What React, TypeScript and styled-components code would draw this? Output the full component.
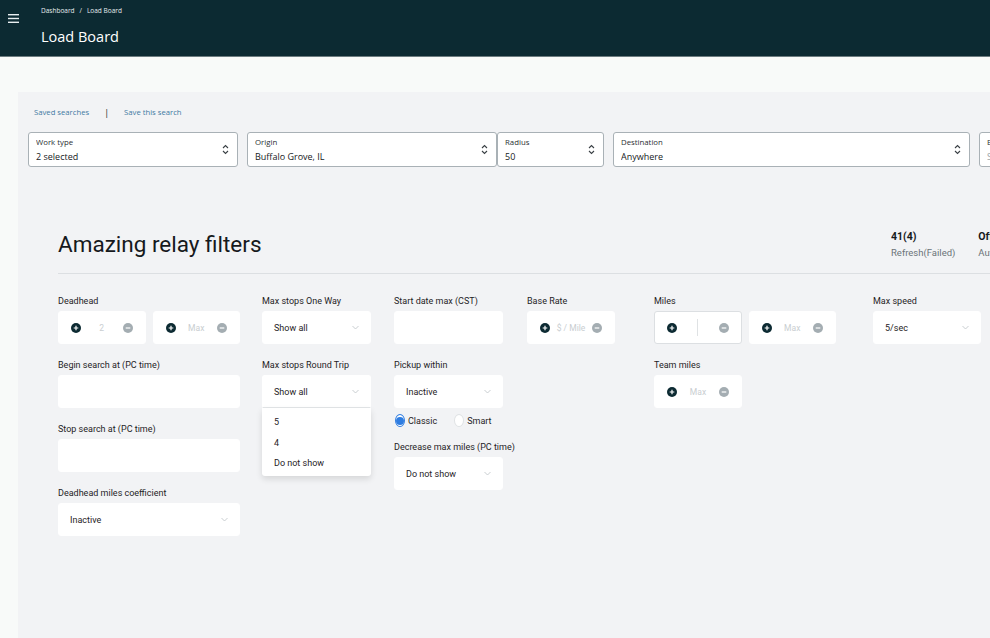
import React from "react";
import styled, { createGlobalStyle } from "styled-components";

const GlobalStyle = createGlobalStyle`
  html, body {
    margin: 0;
    padding: 0;
    background: #f8faf9;
    overflow: hidden;
  }
  * { box-sizing: border-box; }
`;

const Page = styled.div`
  width: 990px;
  height: 638px;
  display: flex;
  flex-direction: column;
  background: #f8faf9;
  font-family: "Roboto", "Liberation Sans", sans-serif;
  overflow: hidden;
`;

const Header = styled.header`
  height: 57px;
  flex-shrink: 0;
  background: #0c2a32;
  border-bottom: 1px solid #6c7c80;
  display: flex;
  font-family: "Open Sans", "Liberation Sans", sans-serif;
`;

const Burger = styled.div`
  width: 41px;
  padding: 6px 0 0 8px;
`;

const HeaderText = styled.div`
  display: flex;
  flex-direction: column;
  padding-top: 6px;
`;

const Crumbs = styled.div`
  font-size: 6.5px;
  color: #e6ecee;
  display: flex;
  gap: 5px;
`;

const HeaderTitle = styled.h1`
  margin: 12px 0 0;
  font-size: 14.5px;
  font-weight: 400;
  color: #ffffff;
`;

const Body = styled.div`
  flex: 1;
  padding: 35px 0 0 18px;
  display: flex;
`;

const Panel = styled.div`
  flex: 1;
  background: #f2f3f5;
  padding: 14px 0 0 10px;
  display: flex;
  flex-direction: column;
  min-width: 0;
`;

const SavedRow = styled.div`
  display: flex;
  align-items: center;
  gap: 15px;
  padding-left: 6px;
  height: 12px;
  font-family: "Open Sans", "Liberation Sans", sans-serif;
  font-size: 7.7px;
`;

const LinkText = styled.span`
  color: #3f7aa3;
`;

const Bar = styled.span`
  color: #16191c;
  font-size: 9px;
`;

const SearchRow = styled.div`
  display: flex;
  margin-top: 14px;
  white-space: nowrap;
`;

const SearchBox = styled.div<{ $w: number; $ml?: number }>`
  width: ${(p) => p.$w}px;
  flex-shrink: 0;
  margin-left: ${(p) => p.$ml ?? 0}px;
  height: 35px;
  background: #fff;
  border: 1px solid #a9b1b6;
  border-radius: 3px;
  display: flex;
  align-items: center;
  padding: 0 8px 0 7px;
  font-family: "Open Sans", "Liberation Sans", sans-serif;
`;

const SearchText = styled.div`
  flex: 1;
  display: flex;
  flex-direction: column;
  gap: 3px;
  overflow: hidden;
`;

const SearchLabel = styled.span`
  font-size: 7.8px;
  color: #2a2f33;
`;

const SearchValue = styled.span<{ $muted?: boolean }>`
  font-size: 9px;
  color: ${(p) => (p.$muted ? "#9aa3a8" : "#16191c")};
`;

const FilterArea = styled.div`
  margin-top: 60px;
  padding-left: 30px;
  display: flex;
  flex-direction: column;
`;

const TitleRow = styled.div`
  display: flex;
  align-items: center;
  justify-content: space-between;
  height: 47px;
  border-bottom: 1px solid #dcdfe2;
  padding-bottom: 19px;
  white-space: nowrap;
`;

const Title = styled.h2`
  margin: 0;
  font-size: 22.5px;
  font-weight: 400;
  color: #16191c;
  line-height: 1;
  padding-top: 8px;
`;

const Stats = styled.div`
  display: flex;
  gap: 23px;
  margin-right: -40px;
  width: 139px;
  overflow: hidden;
  padding-top: 7px;
`;

const Stat = styled.div`
  display: flex;
  flex-direction: column;
  gap: 4px;
`;

const StatNum = styled.span`
  font-size: 10.5px;
  font-weight: 700;
  color: #16191c;
`;

const StatLabel = styled.span`
  font-size: 9.5px;
  color: #6b7378;
`;

const Grid = styled.div`
  display: flex;
  padding-top: 21px;
  align-items: flex-start;
`;

const Column = styled.div<{ $w: number; $ml?: number }>`
  width: ${(p) => p.$w}px;
  margin-left: ${(p) => p.$ml ?? 0}px;
  flex-shrink: 0;
  display: flex;
  flex-direction: column;
`;

const Field = styled.div`
  display: flex;
  flex-direction: column;
  margin-bottom: 15px;
  position: relative;
`;

const Label = styled.label`
  font-size: 9px;
  line-height: 12px;
  color: #1f2326;
  margin-bottom: 4px;
  white-space: nowrap;
`;

const Box = styled.div<{ $bordered?: boolean; $open?: boolean }>`
  height: 33px;
  background: #fff;
  border-radius: ${(p) => (p.$open ? "3px 3px 0 0" : "3px")};
  border: 1px solid ${(p) => (p.$bordered ? "#dcdfe2" : "#fff")};
  border-bottom-color: ${(p) => (p.$open ? "#e3e6e8" : p.$bordered ? "#dcdfe2" : "#fff")};
  display: flex;
  align-items: center;
  font-size: 9px;
  color: #1f2326;
`;

const Pair = styled.div`
  display: flex;
  gap: 7px;
`;

const Stepper = styled(Box)`
  width: 88px;
  justify-content: space-between;
  padding: 0 12px;
`;

const Placeholder = styled.span`
  font-size: 8.5px;
  color: #c9ced1;
`;

const Divider = styled.span`
  width: 1px;
  height: 17px;
  background: #dfe2e4;
`;

const SelectBox = styled(Box)`
  justify-content: space-between;
  padding: 0 11px 0 11px;
`;

const Menu = styled.div`
  position: absolute;
  top: 49px;
  left: 0;
  right: 0;
  background: #fff;
  border-radius: 0 0 3px 3px;
  box-shadow: 0 3px 6px rgba(0, 0, 0, 0.12);
  padding: 8px 0 6px 12px;
  display: flex;
  flex-direction: column;
  gap: 8px;
  z-index: 2;
`;

const MenuItem = styled.span`
  font-size: 9px;
  line-height: 12.5px;
  color: #1f2326;
`;

const RadioRow = styled.div`
  display: flex;
  align-items: center;
  gap: 3px;
  margin: -9px 0 14px 1px;
  height: 13px;
`;

const Radio = styled.span<{ $on?: boolean }>`
  width: 13px;
  height: 13px;
  border-radius: 50%;
  background: #fff;
  border: ${(p) => (p.$on ? "1.5px solid #2f7de1" : "1px solid #dfe2e4")};
  display: flex;
  align-items: center;
  justify-content: center;
  &::after {
    content: "";
    width: 8px;
    height: 8px;
    border-radius: 50%;
    background: ${(p) => (p.$on ? "#2f7de1" : "transparent")};
  }
`;

const RadioText = styled.span`
  font-size: 9px;
  color: #1f2326;
  margin-right: 14px;
`;

const Hamburger = () => (
  <svg width="11" height="9" viewBox="0 0 11 9">
    <rect x="0" y="0" width="11" height="1.4" fill="#e8eef0" />
    <rect x="0" y="3.8" width="11" height="1.4" fill="#e8eef0" />
    <rect x="0" y="7.6" width="11" height="1.4" fill="#e8eef0" />
  </svg>
);

const UpDown = () => (
  <svg width="7" height="11" viewBox="0 0 7 11">
    <path d="M1 4 L3.5 1.5 L6 4" stroke="#3a4045" strokeWidth="1.1" fill="none" />
    <path d="M1 7 L3.5 9.5 L6 7" stroke="#3a4045" strokeWidth="1.1" fill="none" />
  </svg>
);

const Chevron = () => (
  <svg width="7" height="5" viewBox="0 0 7 5">
    <path d="M0.5 1 L3.5 4 L6.5 1" stroke="#c3c8cc" strokeWidth="0.9" fill="none" />
  </svg>
);

const Plus = () => (
  <svg width="10" height="10" viewBox="0 0 10 10">
    <circle cx="5" cy="5" r="5" fill="#0c2a32" />
    <path d="M5 2.7 V7.3 M2.7 5 H7.3" stroke="#fff" strokeWidth="1.2" />
  </svg>
);

const Minus = () => (
  <svg width="10" height="10" viewBox="0 0 10 10">
    <circle cx="5" cy="5" r="5" fill="#a4adb2" />
    <path d="M2.7 5 H7.3" stroke="#fff" strokeWidth="1.2" />
  </svg>
);

function Step({ text, bordered, divider }: { text?: string; bordered?: boolean; divider?: boolean }) {
  return (
    <Stepper $bordered={bordered}>
      <Plus />
      {divider ? <Divider /> : <Placeholder>{text}</Placeholder>}
      <Minus />
    </Stepper>
  );
}

function Select({ value, open }: { value: string; open?: boolean }) {
  return (
    <SelectBox $open={open}>
      <span>{value}</span>
      <Chevron />
    </SelectBox>
  );
}

function Search({ label, value, w, ml, muted, arrows = true }: { label: string; value: string; w: number; ml?: number; muted?: boolean; arrows?: boolean }) {
  return (
    <SearchBox $w={w} $ml={ml}>
      <SearchText>
        <SearchLabel>{label}</SearchLabel>
        <SearchValue $muted={muted}>{value}</SearchValue>
      </SearchText>
      {arrows && <UpDown />}
    </SearchBox>
  );
}

export default function App() {
  return (
    <>
      <GlobalStyle />
      <Page>
        <Header>
          <Burger>
            <Hamburger />
          </Burger>
          <HeaderText>
            <Crumbs>
              <span>Dashboard</span>
              <span>/</span>
              <span>Load Board</span>
            </Crumbs>
            <HeaderTitle>Load Board</HeaderTitle>
          </HeaderText>
        </Header>

        <Body>
          <Panel>
            <SavedRow>
              <LinkText>Saved searches</LinkText>
              <Bar>|</Bar>
              <LinkText>Save this search</LinkText>
            </SavedRow>

            <SearchRow>
              <Search label="Work type" value="2 selected" w={210} />
              <Search label="Origin" value="Buffalo Grove, IL" w={250} ml={9} />
              <Search label="Radius" value="50" w={107} />
              <Search label="Destination" value="Anywhere" w={357} ml={9} />
              <Search label="End date" value="Select" w={120} ml={9} muted arrows={false} />
            </SearchRow>

            <FilterArea>
              <TitleRow>
                <Title>Amazing relay filters</Title>
                <Stats>
                  <Stat>
                    <StatNum>41(4)</StatNum>
                    <StatLabel>Refresh(Failed)</StatLabel>
                  </Stat>
                  <Stat>
                    <StatNum>Off</StatNum>
                    <StatLabel>Auto book</StatLabel>
                  </Stat>
                </Stats>
              </TitleRow>

              <Grid>
                <Column $w={182}>
                  <Field>
                    <Label>Deadhead</Label>
                    <Pair>
                      <Step text="2" />
                      <Step text="Max" />
                    </Pair>
                  </Field>
                  <Field>
                    <Label>Begin search at (PC time)</Label>
                    <Box />
                  </Field>
                  <Field>
                    <Label>Stop search at (PC time)</Label>
                    <Box />
                  </Field>
                  <Field>
                    <Label>Deadhead miles coefficient</Label>
                    <Select value="Inactive" />
                  </Field>
                </Column>

                <Column $w={109} $ml={22}>
                  <Field>
                    <Label>Max stops One Way</Label>
                    <Select value="Show all" />
                  </Field>
                  <Field>
                    <Label>Max stops Round Trip</Label>
                    <Select value="Show all" open />
                    <Menu>
                      <MenuItem>5</MenuItem>
                      <MenuItem>4</MenuItem>
                      <MenuItem>Do not show</MenuItem>
                    </Menu>
                  </Field>
                </Column>

                <Column $w={109} $ml={23}>
                  <Field>
                    <Label>Start date max (CST)</Label>
                    <Box />
                  </Field>
                  <Field>
                    <Label>Pickup within</Label>
                    <Select value="Inactive" />
                  </Field>
                  <RadioRow>
                    <Radio $on />
                    <RadioText>Classic</RadioText>
                    <Radio />
                    <RadioText>Smart</RadioText>
                  </RadioRow>
                  <Field>
                    <Label>Decrease max miles (PC time)</Label>
                    <Select value="Do not show" />
                  </Field>
                </Column>

                <Column $w={88} $ml={24}>
                  <Field>
                    <Label>Base Rate</Label>
                    <Step text="$ / Mile" />
                  </Field>
                </Column>

                <Column $w={182} $ml={39}>
                  <Field>
                    <Label>Miles</Label>
                    <Pair>
                      <Step bordered divider />
                      <Step text="Max" />
                    </Pair>
                  </Field>
                  <Field>
                    <Label>Team miles</Label>
                    <Step text="Max" />
                  </Field>
                </Column>

                <Column $w={108} $ml={37}>
                  <Field>
                    <Label>Max speed</Label>
                    <Select value="5/sec" />
                  </Field>
                </Column>
              </Grid>
            </FilterArea>
          </Panel>
        </Body>
      </Page>
    </>
  );
}
